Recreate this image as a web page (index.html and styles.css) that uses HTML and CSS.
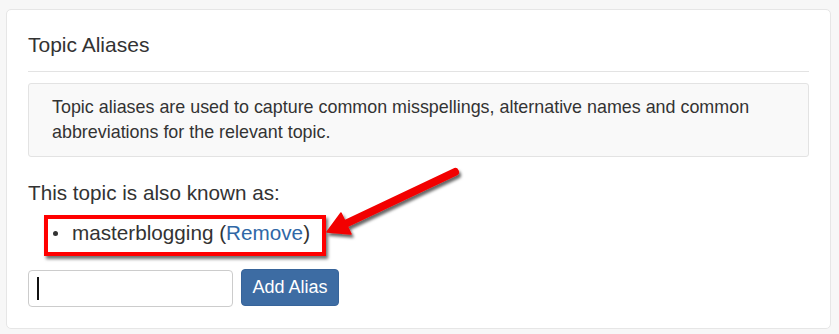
FILE: index.html
```html
<!DOCTYPE html>
<html>
<head>
<meta charset="utf-8">
<link rel="stylesheet" href="styles.css">
</head>
<body>
<div class="card">
  <h3 class="title">Topic Aliases</h3>
  <hr class="rule">
  <div class="well">Topic aliases are used to capture common misspellings, alternative names and common abbreviations for the relevant topic.</div>
  <p class="known">This topic is also known as:</p>
  <ul class="aliases">
    <li class="alias">masterblogging (<a class="remove" href="#">Remove</a>)</li>
  </ul>
  <form class="add-form">
    <div class="fake-input"><span class="caret"></span></div>
    <button type="button" class="btn">Add Alias</button>
  </form>
  <svg class="arrow" width="160" height="100" viewBox="0 0 160 100">
    <defs>
      <filter id="sh" x="-20%" y="-20%" width="150%" height="160%">
        <feDropShadow dx="2" dy="3" stdDeviation="1.5" flood-color="#000" flood-opacity="0.6"/>
      </filter>
    </defs>
    <g filter="url(#sh)" transform="translate(-320,-160)">
      <line x1="455" y1="172" x2="343" y2="225" stroke="#f20000" stroke-width="8" stroke-linecap="round"/>
      <polygon points="327,232 341,213 351,234" fill="#f20000" stroke="#f20000" stroke-width="1.5" stroke-linejoin="round"/>
    </g>
  </svg>
</div>
</body>
</html>
```
FILE: styles.css
```css
html, body {
  margin: 0;
  padding: 0;
}
body {
  background: #f7f7f7;
  font-family: "Liberation Sans", Arial, sans-serif;
  color: #333;
}
.card {
  position: relative;
  box-sizing: border-box;
  width: 825px;
  height: 320px;
  margin: 9px 0 0 6px;
  background: #fff;
  border: 1px solid #e6e6e6;
  border-radius: 5px;
  padding: 24px 21px 0 21px;
}
.title {
  margin: 0;
  font-size: 21px;
  font-weight: normal;
  line-height: 22px;
}
.rule {
  margin: 15px 0 0 0;
  border: 0;
  border-top: 1px solid #e3e3e3;
  height: 0;
}
.well {
  margin-top: 11px;
  box-sizing: border-box;
  height: 74px;
  background: #f9f9f9;
  border: 1px solid #e3e3e3;
  border-radius: 3px;
  padding: 11px 23px 0 23px;
  font-size: 17.9px;
  line-height: 25px;
}
.known {
  margin: 22px 0 0 0;
  font-size: 20.7px;
  line-height: 28px;
}
.aliases {
  list-style: none;
  display: inline-block;
  margin: 8px 0 0 16px;
  padding: 0 12px 5px 0;
  border: 4px solid #f00;
  box-shadow: 2px 3px 3px rgba(0,0,0,0.55);
  font-size: 20.7px;
  line-height: 28px;
  vertical-align: top;
}
.alias {
  display: flex;
  align-items: center;
}
.alias::before {
  content: "";
  width: 5px;
  height: 5px;
  border-radius: 50%;
  background: #333;
  margin: 0 14px 0 5px;
}
.remove {
  color: #2f67a6;
  text-decoration: none;
}
.add-form {
  display: flex;
  gap: 8px;
  margin-top: 13px;
  align-items: flex-start;
}
.fake-input {
  box-sizing: border-box;
  width: 205px;
  height: 37px;
  border: 1px solid #ccc;
  border-radius: 4px;
  display: flex;
  align-items: center;
  padding-left: 8px;
  margin-top: 1px;
  background: #fff;
}
.caret {
  width: 2px;
  height: 23px;
  background: #111;
}
.btn {
  box-sizing: border-box;
  width: 98px;
  height: 37px;
  border: 1px solid #37649a;
  border-radius: 4px;
  background: #3d6ca3;
  color: #fff;
  font-family: "Liberation Sans", Arial, sans-serif;
  font-size: 18px;
  padding: 0;
}
.arrow {
  position: absolute;
  left: 313px;
  top: 150px;
}
```
